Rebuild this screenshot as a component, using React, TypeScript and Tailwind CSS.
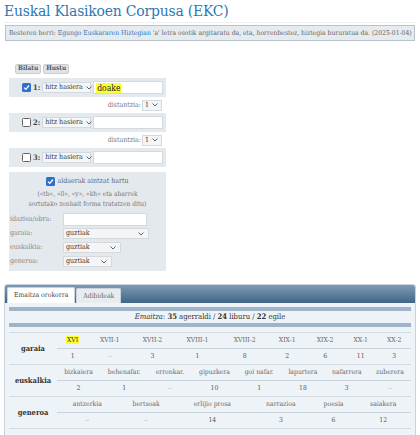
import React from "react";

const F = { fontFamily: '"DejaVu Serif Condensed", "DejaVu Serif", serif' };

function Chevron() {
  return (
    <svg width="6" height="4" viewBox="0 0 6 4" className="ml-[3px] shrink-0">
      <path d="M0.5 0.5 L3 3 L5.5 0.5" fill="none" stroke="#555" strokeWidth="0.9" />
    </svg>
  );
}

function Sel({ text, w, h = 11 }: { text: string; w: number; h?: number }) {
  return (
    <div
      className="flex shrink-0 items-center justify-between whitespace-nowrap border border-[#d4d9de] bg-[#f3f5f7] pl-[2px] pr-[4px] text-[7px] text-[#333]"
      style={{ width: w, height: h }}
    >
      <span>{text}</span>
      <Chevron />
    </div>
  );
}

function Check({ on }: { on: boolean }) {
  return on ? (
    <div className="flex h-[9px] w-[9px] shrink-0 items-center justify-center rounded-[1.5px] bg-[#2f6fce]">
      <svg width="7" height="7" viewBox="0 0 7 7">
        <path d="M1 3.6 L2.8 5.4 L6 1.5" fill="none" stroke="white" strokeWidth="1.3" />
      </svg>
    </div>
  ) : (
    <div className="h-[9px] w-[9px] shrink-0 rounded-[1.5px] border border-[#666] bg-white" />
  );
}

function TermRow({ n, on, value }: { n: number; on: boolean; value?: string }) {
  return (
    <div className="flex h-[19px] items-center bg-[#e4e9ee] pl-[13px]">
      <Check on={on} />
      <span className="ml-[2px] mr-[2px] text-[7.5px] font-bold text-[#444]">{n}:</span>
      <Sel text="hitz hasiera" w={49} />
      <div className="ml-[2px] flex h-[13px] w-[70px] items-center border border-[#d4d9de] bg-white px-[2px]">
        {value && <span className="bg-[#ffff33] px-[1px] text-[8.5px] leading-[10px] text-[#222]">{value}</span>}
      </div>
    </div>
  );
}

function Dist() {
  return (
    <div className="flex h-[16px] items-center justify-end pr-[4px] text-[7px] text-[#777]">
      <span className="mr-[1px]">distantzia:</span>
      <Sel text="1" w={20} />
    </div>
  );
}

function Field({ label, children }: { label: string; children: React.ReactNode }) {
  return (
    <div className="flex h-[14px] items-center">
      <span className="w-[53px] text-[7px] text-[#888]">{label}</span>
      {children}
    </div>
  );
}

function Cat({ label, heads, vals, hl }: { label: string; heads: string[]; vals: string[]; hl?: number }) {
  return (
    <div className="flex h-[32px] border-b border-[#d3dbe3]">
      <div className="flex w-[48px] shrink-0 items-center justify-center text-[7.5px] font-bold text-[#333]">{label}</div>
      <table className="h-full w-full border-collapse text-[6.8px] text-[#666]">
        <tbody>
          <tr className="h-[15px] border-b border-[#c9d2db]">
            {heads.map((h, i) => (
              <td key={i} className="px-[2px] text-center align-middle whitespace-nowrap">
                {i === hl ? <span className="bg-[#ffff33] px-[1px] text-[#333]">{h}</span> : h}
              </td>
            ))}
          </tr>
          <tr>
            {vals.map((v, i) => (
              <td key={i} className={"text-center align-middle " + (v === "--" ? "text-[#aaa]" : "text-[#555]")}>
                {v}
              </td>
            ))}
          </tr>
        </tbody>
      </table>
    </div>
  );
}

export default function App() {
  return (
    <div className="h-[435px] w-[420px] overflow-hidden bg-white" style={F}>
      <div className="mx-[4px] border-b border-dotted border-[#dde3e8] pb-[1px] pt-[1px] text-[15.5px] leading-[20px] tracking-[-0.2px] text-[#2a78b3]">
        Euskal Klasikoen Corpusa (EKC)
      </div>
      <div className="mx-[5px] mt-[2px] flex h-[16px] items-center whitespace-nowrap border border-[#b9c3cc] bg-[#e6ebf0] px-[3px] text-[6.75px] text-[#666]">
        Besteren berri:&nbsp;<span className="text-[#2a78b3]">Egungo Euskararen Hiztegian</span>&nbsp;'a' letra osotik argitaratu da, eta, horrenbestez, hiztegia bururatua da. (2025-01-04)
      </div>

      <div className="ml-[9px] w-[157px]">
        <div className="ml-[6px] mt-[23px] flex gap-[2px]">
          <div className="flex h-[10px] items-center rounded-[2px] border border-[#c8ccd0] bg-[#dfe3e7] px-[2px] text-[6.5px] font-bold text-[#555]">Bilatu</div>
          <div className="flex h-[10px] items-center rounded-[2px] border border-[#c8ccd0] bg-[#dfe3e7] px-[2px] text-[6.5px] font-bold text-[#555]">Hustu</div>
        </div>
        <div className="mt-[4px]">
          <TermRow n={1} on value="doake" />
          <Dist />
          <TermRow n={2} on={false} />
          <Dist />
          <TermRow n={3} on={false} />
        </div>
        <div className="mt-[5px] h-[99px] bg-[#e4e9ee] pt-[4px]">
          <div className="flex items-center justify-center text-[7px] text-[#666]">
            <Check on />
            <span className="ml-[2px]">aldaerak aintzat hartu</span>
          </div>
          <div className="mt-[2px] text-center text-[6.6px] leading-[10px] text-[#777]">
            («tb», «ll», «y», «kh» eta abarrek
            <br />
            sortutako zenbait forma tratatzen ditu)
          </div>
          <div className="mt-[4px] pl-[1px]">
            <Field label="idazlea/obra:">
              <div className="h-[13px] w-[84px] border border-[#d4d9de] bg-white" />
            </Field>
            <Field label="garaia:">
              <Sel text="guztiak" w={86} />
            </Field>
            <Field label="euskalkia:">
              <Sel text="guztiak" w={58} />
            </Field>
            <Field label="generoa:">
              <Sel text="guztiak" w={49} />
            </Field>
          </div>
        </div>
      </div>

      <div className="mx-[4px] mt-[13px] h-[160px] overflow-hidden rounded-[3px] border border-[#c9d2da] bg-[#eef3f8]">
        <div className="flex h-[18px] items-end bg-gradient-to-b from-[#7e9bb3] to-[#3f6686] pl-[2px]">
          <div className="flex h-[16px] items-center rounded-t-[2px] border border-b-0 border-[#c9d2da] bg-white px-[6px] text-[6.8px] text-[#444]">
            Emaitza orokorra
          </div>
          <div className="ml-[1px] flex h-[15px] items-center rounded-t-[2px] border border-b-0 border-[#c9d2da] bg-[#e8ecef] px-[6px] text-[6.8px] text-[#666]">
            Adibideak
          </div>
        </div>
        <div className="px-[4px] pt-[4px]">
          <div className="h-[4px] bg-[#9fb4c7]" />
          <div className="flex h-[12px] items-center justify-center text-[7.6px] text-[#333]">
            <i>Emaitza</i>:&nbsp;<b>35</b>&nbsp;agerraldi /&nbsp;<b>24</b>&nbsp;liburu /&nbsp;<b>22</b>&nbsp;egile
          </div>
          <div className="h-[4px] bg-[#9fb4c7]" />
          <div className="mt-[5px] border-t border-[#d3dbe3]">
            <Cat
              label="garaia"
              hl={0}
              heads={["XVI", "XVII-1", "XVII-2", "XVIII-1", "XVIII-2", "XIX-1", "XIX-2", "XX-1", "XX-2"]}
              vals={["1", "--", "3", "1", "8", "2", "6", "11", "3"]}
            />
            <Cat
              label="euskalkia"
              heads={["bizkaiera", "behenafar.", "erronkar.", "gipuzkera", "goi nafar.", "lapurtera", "nafarrera", "zuberera"]}
              vals={["2", "1", "--", "10", "1", "18", "3", "--"]}
            />
            <Cat
              label="generoa"
              heads={["antzerkia", "bertsoak", "erlijio prosa", "narrazioa", "poesia", "saiakera"]}
              vals={["--", "--", "14", "3", "6", "12"]}
            />
          </div>
        </div>
      </div>
    </div>
  );
}
